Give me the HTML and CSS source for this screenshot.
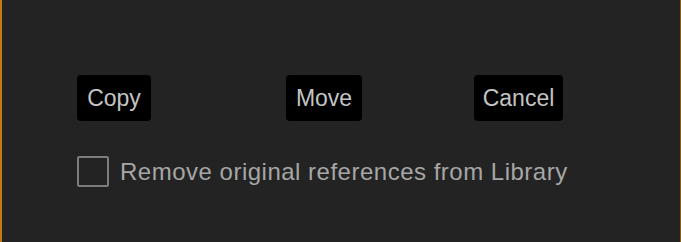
FILE: index.html
```html
<!DOCTYPE html>
<html>
<head>
<meta charset="utf-8">
<link rel="stylesheet" href="styles.css">
</head>
<body>
<div class="panel">
  <div class="actions">
    <button class="btn btn-copy">Copy</button>
    <button class="btn btn-move">Move</button>
    <button class="btn btn-cancel">Cancel</button>
  </div>
  <label class="option">
    <span class="checkbox"></span>
    <span class="option-text">Remove original references from Library</span>
  </label>
</div>
</body>
</html>
```

FILE: styles.css
```css
html, body {
  margin: 0;
  padding: 0;
  background: #232323;
}
.panel {
  box-sizing: border-box;
  width: 681px;
  height: 242px;
  background: #232323;
  border-left: 2px solid #c47a10;
  border-right: 1px solid #8a5c16;
  padding: 75px 0 0 75px;
  font-family: "Liberation Sans", Arial, Helvetica, sans-serif;
}
.actions {
  display: flex;
  align-items: center;
}
.btn {
  box-sizing: border-box;
  height: 46px;
  padding: 0;
  background: #000;
  color: #c4c4c4;
  border: none;
  border-radius: 4px;
  font-family: "Liberation Sans", Arial, Helvetica, sans-serif;
  font-size: 23px;
  display: flex;
  align-items: center;
  justify-content: center;
}
.btn-copy {
  width: 74px;
}
.btn-move {
  width: 76px;
  margin-left: 135px;
}
.btn-cancel {
  width: 89px;
  margin-left: 112px;
}
.option {
  display: flex;
  align-items: center;
  margin-top: 35px;
}
.checkbox {
  box-sizing: border-box;
  width: 32px;
  height: 31px;
  border: 2px solid #7c7c7c;
  border-radius: 2px;
}
.option-text {
  margin-left: 11px;
  color: #a6a6a6;
  font-size: 24px;
  letter-spacing: 0.5px;
}
```
